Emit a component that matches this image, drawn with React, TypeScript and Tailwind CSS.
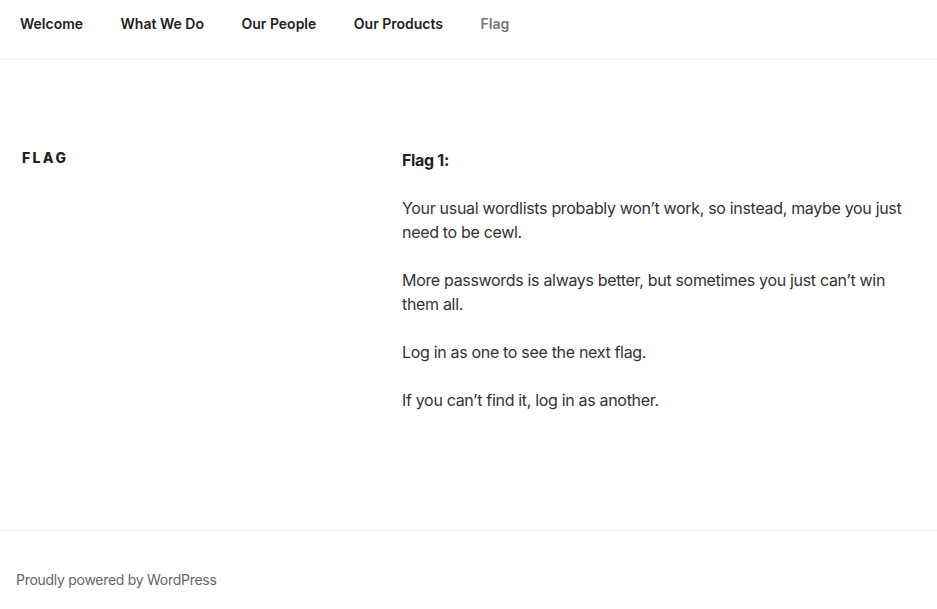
export default function App() {
  const font = { fontFamily: 'Inter, "Liberation Sans", sans-serif' };
  return (
    <div className="w-[937px] h-[609px] bg-white flex flex-col" style={font}>
      <header className="h-[60px] border-b border-[#eeeeee] shrink-0">
        <nav className="flex items-center h-[46px] pl-[20px] gap-[37.5px] text-[14px] font-semibold text-[#222222]">
          <span>Welcome</span>
          <span>What We Do</span>
          <span>Our People</span>
          <span>Our Products</span>
          <span className="text-[#767676]">Flag</span>
        </nav>
      </header>
      <main className="flex h-[470px] pt-[88px]">
        <div className="w-[402px] shrink-0 pl-[22px]">
          <h2 className="text-[14px] font-extrabold uppercase tracking-[0.17em] text-[#222222] leading-[20px]">Flag</h2>
        </div>
        <div className="w-[515px] text-[16px] leading-[24px] text-[#333333] tracking-[-0.02em] flex flex-col gap-[24px]">
          <p className="font-bold text-[#222222]">Flag 1:</p>
          <p>Your usual wordlists probably won’t work, so instead, maybe you just need to be cewl.</p>
          <p>More passwords is always better, but sometimes you just can’t win them all.</p>
          <p>Log in as one to see the next flag.</p>
          <p>If you can’t find it, log in as another.</p>
        </div>
      </main>
      <footer className="border-t border-[#eeeeee] flex-1 pl-[16px] pt-[38px]">
        <p className="text-[14px] leading-[21px] text-[#666666] tracking-[-0.02em]">Proudly powered by WordPress</p>
      </footer>
    </div>
  );
}
